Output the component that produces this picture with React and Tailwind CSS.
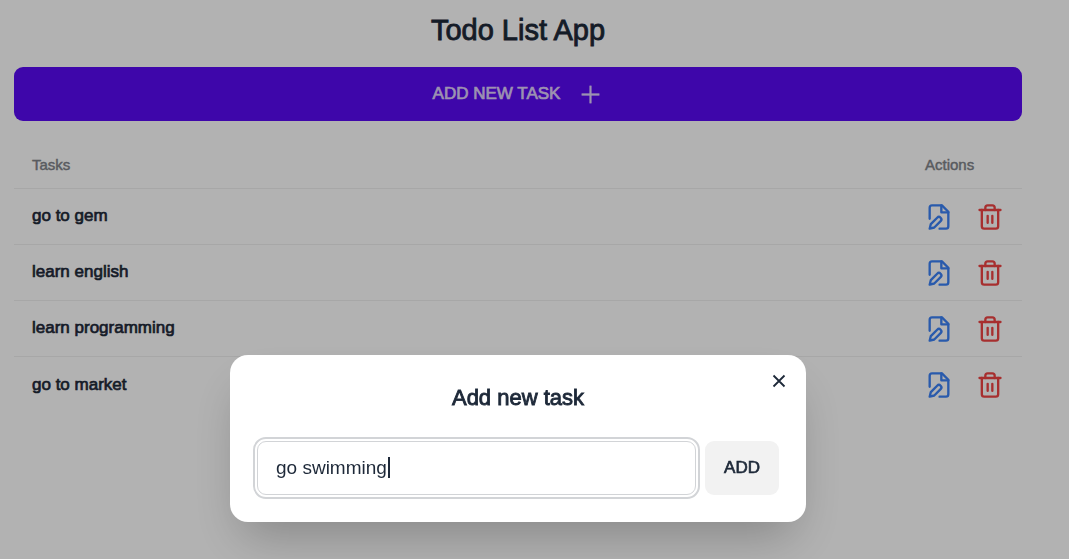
import { useState } from "react";
import { AiOutlinePlus } from "react-icons/ai";
import { FiTrash2 } from "react-icons/fi";

const initialTasks = ["go to gem", "learn english", "learn programming", "go to market"];

function FileEditIcon() {
  return (
    <svg
      className="size-7"
      viewBox="0 0 24 24"
      fill="none"
      stroke="currentColor"
      strokeWidth="2"
      strokeLinecap="round"
      strokeLinejoin="round"
      aria-hidden="true"
    >
      <path d="M4 13.5V4a2 2 0 0 1 2-2h8.5L20 7.5V20a2 2 0 0 1-2 2h-5.5" />
      <polyline points="14 2 14 8 20 8" />
      <path d="M10.42 12.61a2.1 2.1 0 1 1 2.97 2.97L7.95 21 4 22l.99-3.95 5.43-5.44Z" />
    </svg>
  );
}

function TaskTable({ tasks }) {
  return (
    <table className="mt-[22px] w-full border-collapse text-left">
      <thead>
        <tr className="h-[45px] border-b border-[#f0f0f0] text-[15px] text-[#808389] [-webkit-text-stroke:0.03em]">
          <th className="px-[18px] font-normal">Tasks</th>
          <th className="w-[114px] px-[18px] font-normal">Actions</th>
        </tr>
      </thead>
      <tbody>
        {tasks.map((task) => (
          <tr key={task} className="h-14 border-b border-[#f0f0f0] last:border-0">
            <td className="px-[18px] text-[17px] [-webkit-text-stroke:0.04em]">{task}</td>
            <td className="px-[18px] pt-[2px]">
              <div className="flex gap-[23px]">
                <button type="button" aria-label="Edit task" className="text-[#3b82f6]">
                  <FileEditIcon />
                </button>
                <button type="button" aria-label="Delete task" className="text-[#ef4444]">
                  <FiTrash2 className="size-7" />
                </button>
              </div>
            </td>
          </tr>
        ))}
      </tbody>
    </table>
  );
}

function AddTaskModal() {
  const [value, setValue] = useState("go swimming");
  return (
    <div className="fixed inset-0 flex items-start justify-center overflow-hidden bg-black/30 pt-[355px] pr-[33px]">
      <div
        role="dialog"
        aria-labelledby="modal-title"
        className="relative w-full max-w-xl rounded-[18px] bg-white p-[27px] shadow-2xl"
      >
        <button
          type="button"
          aria-label="Close"
          className="absolute top-[11px] right-3 flex size-[30px] items-center justify-center"
        >
          <svg className="size-[14px]" viewBox="0 0 14 14" fill="none" stroke="currentColor" strokeWidth="1.8" aria-hidden="true">
            <path d="M1.5 1.5l11 11M12.5 1.5l-11 11" />
          </svg>
        </button>
        <h3 id="modal-title" className="text-center text-[22px] leading-8 [-webkit-text-stroke:0.04em]">
          Add new task
        </h3>
        <form className="mt-[27px] flex gap-[9px]" onSubmit={(e) => e.preventDefault()}>
          <div className="relative flex-1">
            <input
              type="text"
              aria-label="Task"
              value={value}
              onChange={(e) => setValue(e.target.value)}
              className="h-[54px] w-full rounded-[9px] border border-[#d2d4d7] bg-white px-[18px] text-[19px] caret-transparent outline-2 outline-offset-2 outline-[#d2d4d7]"
            />
            <span className="pointer-events-none absolute top-4 left-[131px] h-[21px] w-[2px] bg-gray-800" />
          </div>
          <button
            type="submit"
            className="h-[54px] w-[74px] rounded-[9px] bg-[#f2f2f2] text-[17px] [-webkit-text-stroke:0.04em]"
          >
            ADD
          </button>
        </form>
      </div>
    </div>
  );
}

export default function App() {
  return (
    <div className="min-h-screen bg-white font-['Liberation_Sans',Arial,sans-serif] text-gray-800">
      <main className="pt-3 pr-[47px] pl-[14px]">
        <h1 className="text-center text-[29px] leading-9 [-webkit-text-stroke:0.03em]">Todo List App</h1>
        <button
          type="button"
          className="mt-[19px] flex h-[54px] w-full items-center justify-center gap-[18px] rounded-[9px] bg-[#5909f4] text-[17px] text-[#e0d2fe] [-webkit-text-stroke:0.04em]"
        >
          ADD NEW TASK
          <AiOutlinePlus className="size-[25px]" stroke="currentColor" strokeWidth="12" />
        </button>
        <TaskTable tasks={initialTasks} />
      </main>
      <AddTaskModal />
    </div>
  );
}
